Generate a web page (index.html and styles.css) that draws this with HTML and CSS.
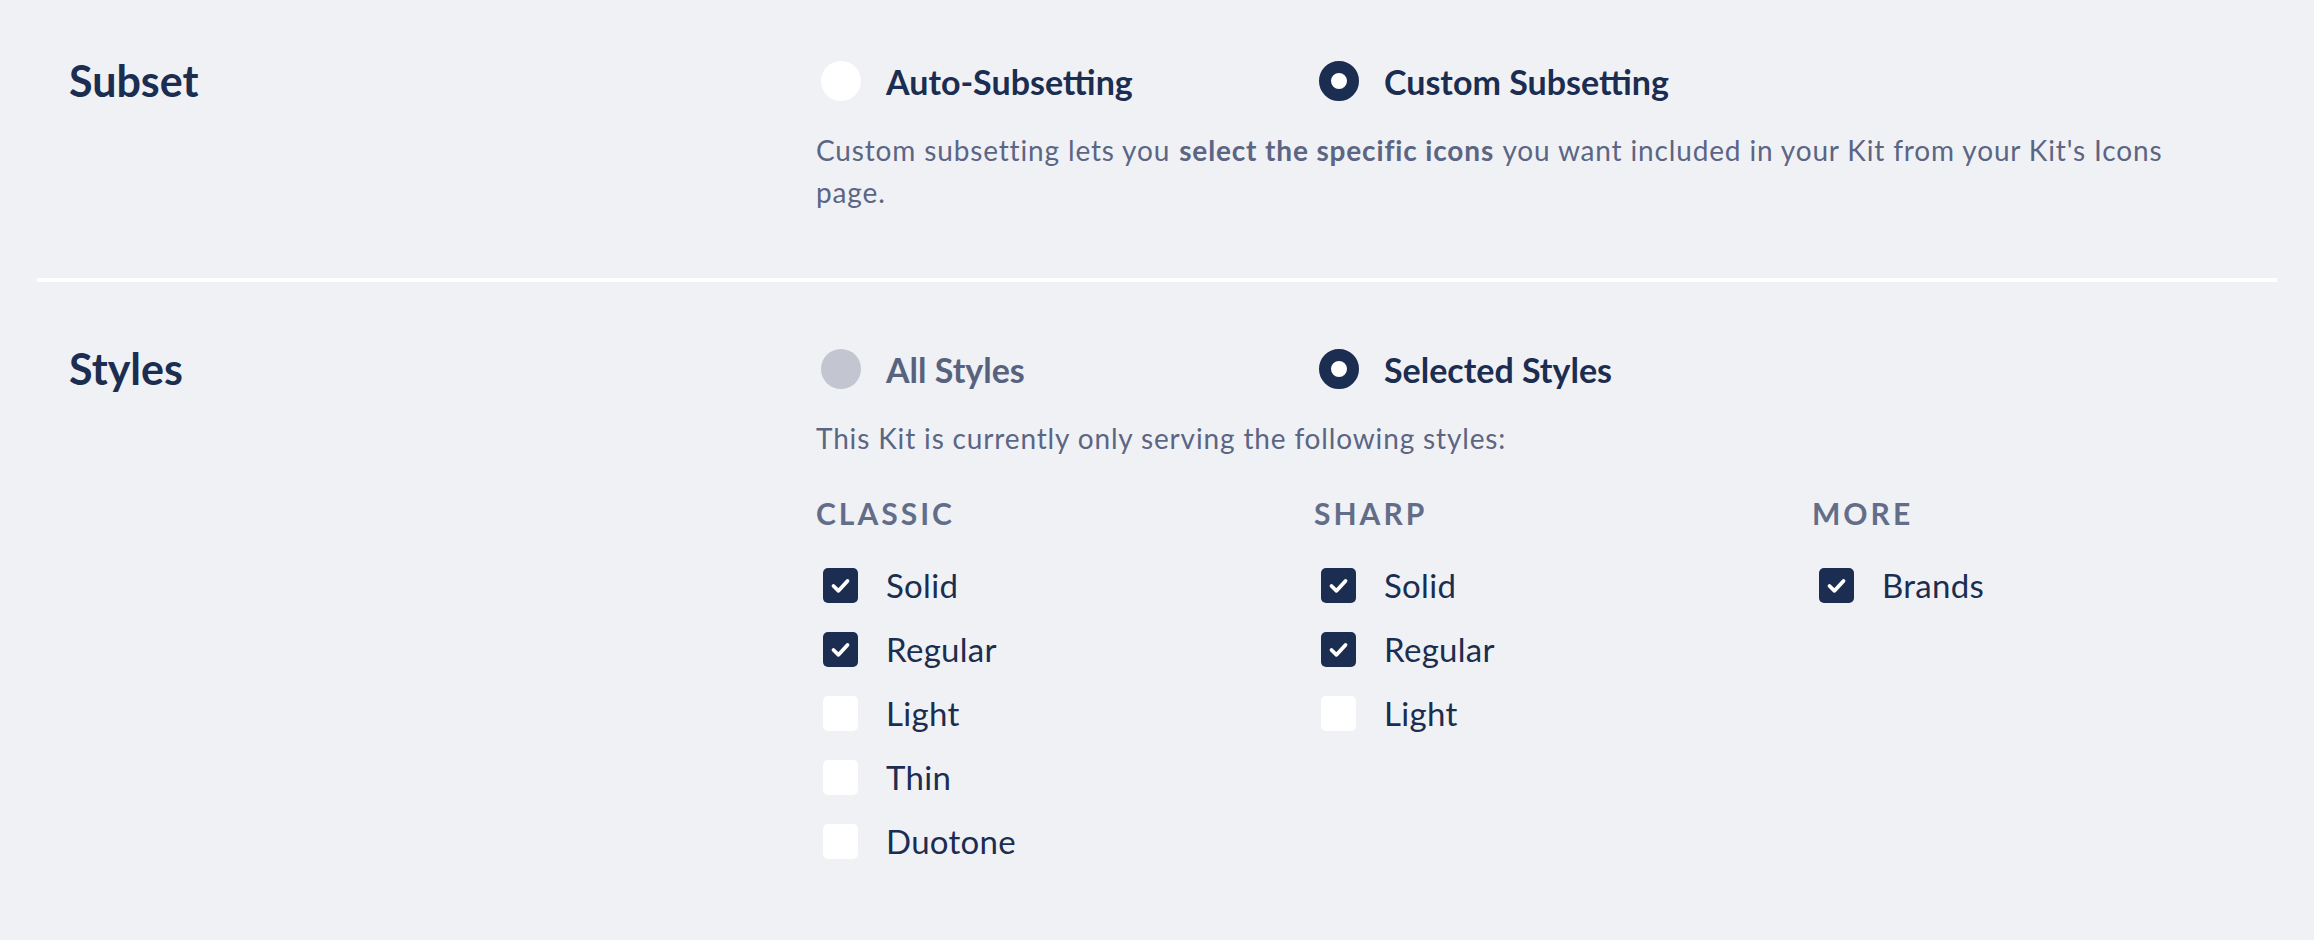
FILE: index.html
```html
<!DOCTYPE html>
<html lang="en">
<head>
<meta charset="utf-8">
<title>Kit Settings</title>
<link rel="stylesheet" href="styles.css">
</head>
<body>
<main class="settings">
  <section class="setting">
    <h3 class="setting-title">Subset</h3>
    <div class="setting-body">
      <div class="choice-grid">
        <label class="radio-option">
          <span class="radio"></span>
          <span class="radio-label">Auto-Subsetting</span>
        </label>
        <label class="radio-option">
          <span class="radio radio-checked"></span>
          <span class="radio-label">Custom Subsetting</span>
        </label>
      </div>
      <p class="setting-desc"><span>Custom subsetting lets you </span><strong>select the specific icons</strong><span> you want included in your Kit from your Kit's Icons </span><span>page.</span></p>
    </div>
  </section>

  <section class="setting">
    <h3 class="setting-title">Styles</h3>
    <div class="setting-body">
      <div class="choice-grid">
        <label class="radio-option">
          <span class="radio radio-disabled"></span>
          <span class="radio-label radio-label-muted">All Styles</span>
        </label>
        <label class="radio-option">
          <span class="radio radio-checked"></span>
          <span class="radio-label">Selected Styles</span>
        </label>
      </div>
      <p class="setting-desc">This Kit is currently only serving the following styles:</p>
      <div class="style-grid">
        <div class="style-group">
          <h4 class="group-title">Classic</h4>
          <ul class="check-list">
            <li class="check-item"><span class="checkbox checked"><svg viewBox="0 0 35 35"><path d="M10.5 18 L15.5 22.8 L24.5 13"/></svg></span>Solid</li>
            <li class="check-item"><span class="checkbox checked"><svg viewBox="0 0 35 35"><path d="M10.5 18 L15.5 22.8 L24.5 13"/></svg></span>Regular</li>
            <li class="check-item"><span class="checkbox"></span>Light</li>
            <li class="check-item"><span class="checkbox"></span>Thin</li>
            <li class="check-item"><span class="checkbox"></span>Duotone</li>
          </ul>
        </div>
        <div class="style-group">
          <h4 class="group-title">Sharp</h4>
          <ul class="check-list">
            <li class="check-item"><span class="checkbox checked"><svg viewBox="0 0 35 35"><path d="M10.5 18 L15.5 22.8 L24.5 13"/></svg></span>Solid</li>
            <li class="check-item"><span class="checkbox checked"><svg viewBox="0 0 35 35"><path d="M10.5 18 L15.5 22.8 L24.5 13"/></svg></span>Regular</li>
            <li class="check-item"><span class="checkbox"></span>Light</li>
          </ul>
        </div>
        <div class="style-group">
          <h4 class="group-title">More</h4>
          <ul class="check-list">
            <li class="check-item"><span class="checkbox checked"><svg viewBox="0 0 35 35"><path d="M10.5 18 L15.5 22.8 L24.5 13"/></svg></span>Brands</li>
          </ul>
        </div>
      </div>
    </div>
  </section>
</main>
</body>
</html>
```
FILE: styles.css
```css
html, body {
  margin: 0;
  padding: 0;
  background: #f0f1f4;
}

body {
  font-family: "Lato", "Noto Sans", sans-serif;
  color: #1b2d50;
  min-height: 940px;
}

.settings {
  padding: 0 37px;
}

.setting {
  display: grid;
  grid-template-columns: 747px 1fr;
  padding: 61px 32px 65px;
  border-bottom: 4px solid #ffffff;
}

.setting + .setting {
  padding-top: 67px;
}

.setting:last-child {
  border-bottom: none;
  padding-bottom: 40px;
}

.setting-title {
  margin: 0;
  font-size: 43px;
  line-height: 40px;
  font-weight: 700;
  color: #1b2d50;
}

.setting-body {
  min-width: 0;
}

.choice-grid,
.style-grid {
  display: grid;
  grid-template-columns: repeat(3, 1fr);
  column-gap: 65px;
}

.radio-option {
  display: flex;
  align-items: center;
  height: 40px;
}

.radio {
  box-sizing: border-box;
  width: 40px;
  height: 40px;
  margin-left: 5px;
  margin-right: 25px;
  border-radius: 50%;
  background: #ffffff;
  flex: none;
}

.radio-checked {
  border: 12.5px solid #1b2d50;
}

.radio-disabled {
  background: #c3c6d1;
}

.radio-label {
  font-size: 34px;
  line-height: 40px;
  font-weight: 700;
  padding-top: 2px;
  white-space: nowrap;
  color: #1b2d50;
}

.radio-label-muted {
  color: #58627f;
}

.setting-desc {
  margin: 28px 0 0;
  max-width: 1400px;
  font-size: 28px;
  line-height: 42px;
  letter-spacing: 0.85px;
  color: #5b6584;
}

.setting-desc strong {
  font-weight: 700;
  padding: 0 1px;
}

.style-grid {
  margin-top: 39px;
}

.group-title {
  margin: 0;
  font-size: 30px;
  line-height: 30px;
  font-weight: 700;
  letter-spacing: 3px;
  text-transform: uppercase;
  color: #626d8a;
}

.check-list {
  list-style: none;
  margin: 40px 0 0;
  padding: 0;
  display: flex;
  flex-direction: column;
  gap: 29px;
}

.check-item {
  display: flex;
  align-items: center;
  height: 35px;
  font-size: 33px;
  line-height: 35px;
  letter-spacing: 0.3px;
  color: #1b2d50;
}

.checkbox {
  width: 35px;
  height: 35px;
  margin-left: 7px;
  margin-right: 28px;
  border-radius: 5px;
  background: #ffffff;
  flex: none;
}

.checkbox.checked {
  background: #1b2d50;
}

.checkbox svg {
  display: block;
  width: 35px;
  height: 35px;
}

.checkbox svg path {
  fill: none;
  stroke: #ffffff;
  stroke-width: 3.8;
  stroke-linecap: round;
  stroke-linejoin: round;
}
```
